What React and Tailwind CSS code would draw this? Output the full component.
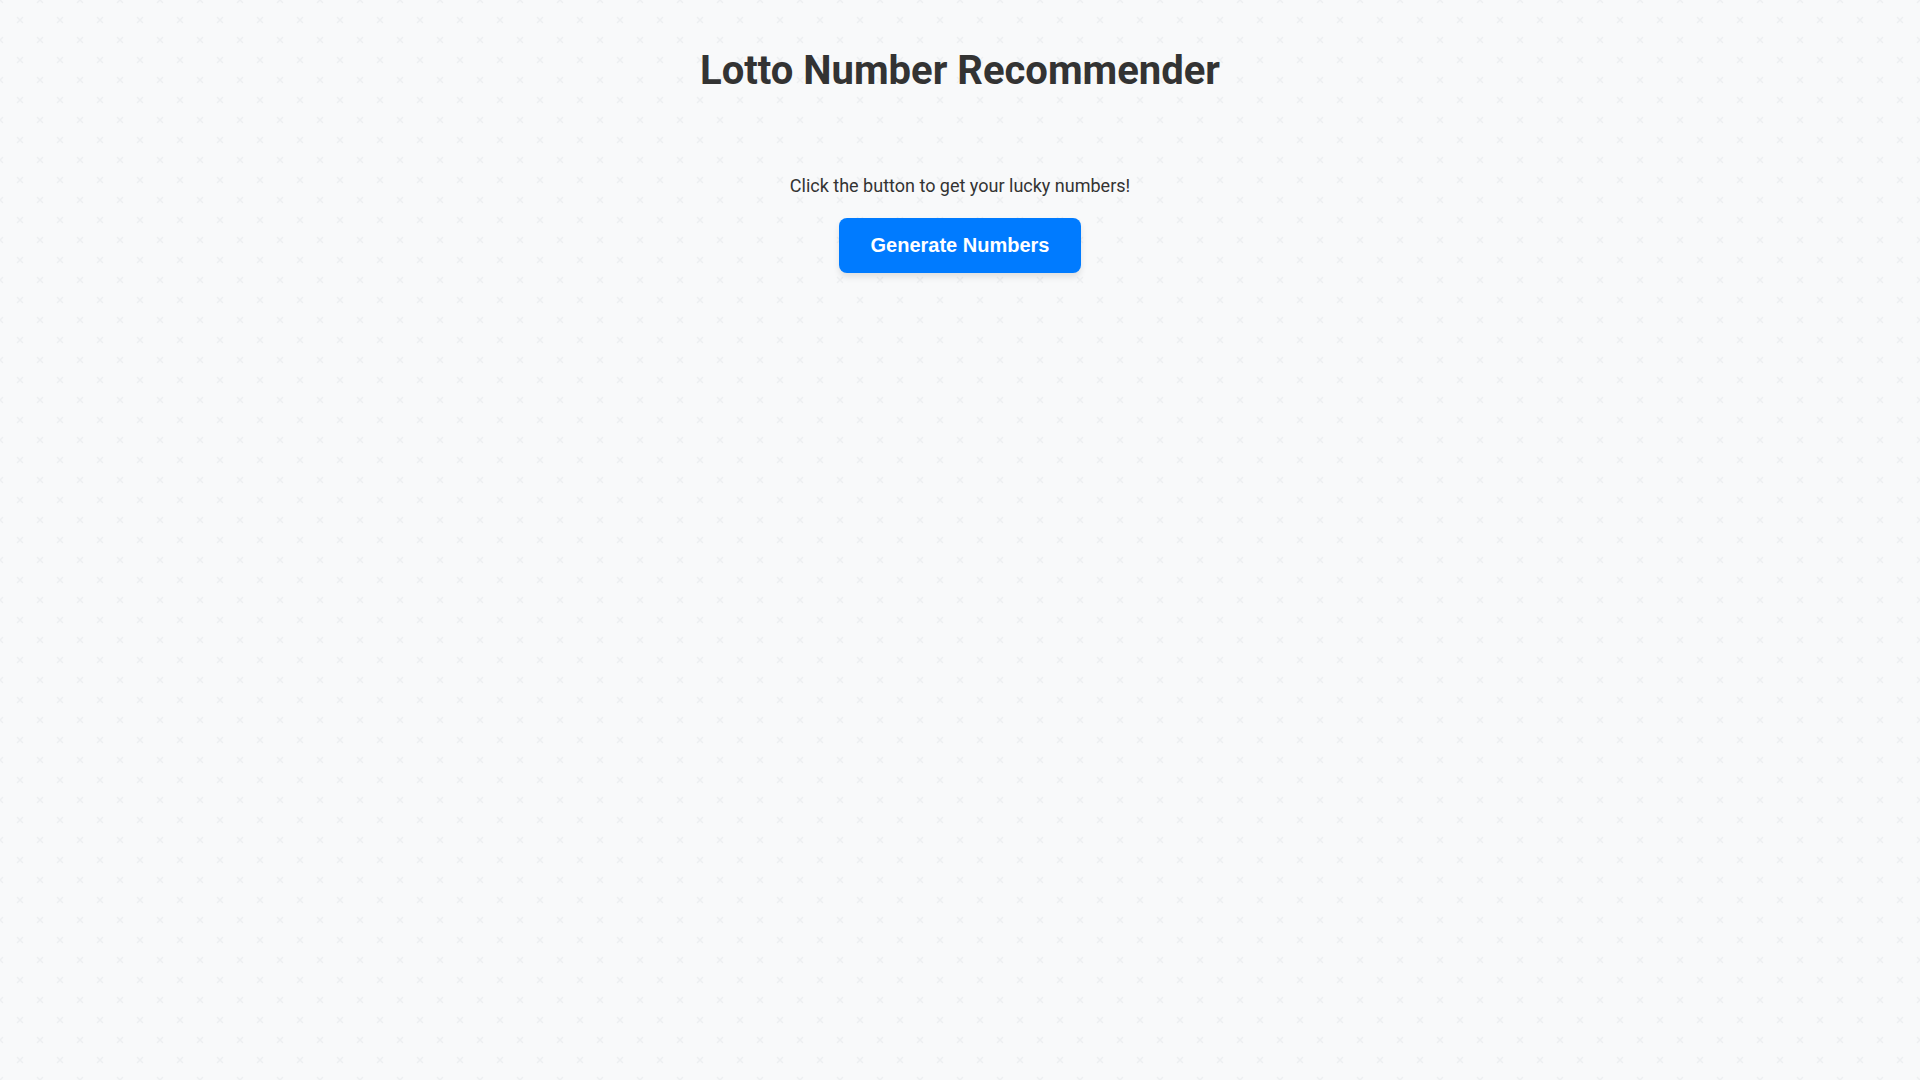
// cross pattern tile, 40px, crosses at (0,0) and (20,20)
const PATTERN =
  "bg-[url(data:image/svg+xml,%3Csvg%20xmlns=%27http://www.w3.org/2000/svg%27%20width=%2740%27%20height=%2740%27%3E%3Cpath%20stroke=%27%23edeff1%27%20stroke-width=%271.5%27%20d=%27M17,17l6,6M23,17l-6,6M-3,-3l6,6M3,-3l-6,6M37,-3l6,6M43,-3l-6,6M-3,37l6,6M3,37l-6,6M37,37l6,6M43,37l-6,6%27/%3E%3C/svg%3E)]";

export default function App() {
  return (
    <div
      className={`min-h-screen bg-[#f8f9fa] ${PATTERN} p-5 text-center font-['Roboto',sans-serif] text-[#333]`}
    >
      <h1 className="my-[26.8px] text-[40px] font-bold leading-[47px]">
        Lotto Number Recommender
      </h1>

      <div className="mt-[81.5px] flex flex-col items-center">
        <p className="text-[18px] leading-[21px]">
          Click the button to get your lucky numbers!
        </p>
        <button
          type="button"
          className="mt-[21.7px] rounded-lg bg-[#007bff] px-8 py-4 font-['Liberation_Sans',Arial,sans-serif] text-[20px] font-bold leading-[23px] text-white shadow-[0_4px_6px_rgba(0,0,0,0.1)] hover:bg-[#0069d9]"
        >
          Generate Numbers
        </button>
      </div>
    </div>
  );
}
